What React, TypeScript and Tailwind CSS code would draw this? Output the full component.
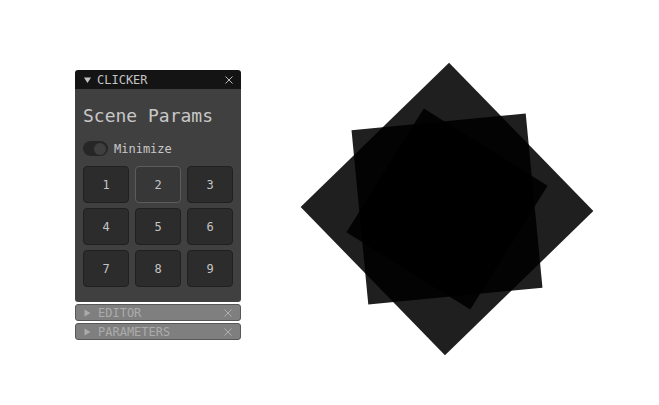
import React from 'react';

const mono = { fontFamily: '"DejaVu Sans Mono", "Liberation Mono", monospace' };

const squares = [
  { side: 207, angle: 45.8 },
  { side: 175, angle: -5.5 },
  { side: 146, angle: 32 },
];

function Close({ color }: { color: string }) {
  return (
    <svg width="8" height="8" viewBox="0 0 8 8" className="shrink-0">
      <path d="M0.5 0.5L7.5 7.5M7.5 0.5L0.5 7.5" stroke={color} strokeWidth="1" />
    </svg>
  );
}

function FoldedBar({ label }: { label: string }) {
  return (
    <div className="h-[17px] flex items-center pl-[8px] pr-[8px] bg-[#7f7f7f] border border-[#575757] rounded-[3px] text-[12px] text-[#ababab]">
      <svg width="7" height="8" viewBox="0 0 7 8" className="shrink-0">
        <path d="M0.5 0.5L6.5 4L0.5 7.5Z" fill="#ababab" />
      </svg>
      <span className="ml-[7px] flex-1 leading-none">{label}</span>
      <Close color="#b0b0b0" />
    </div>
  );
}

export default function App() {
  return (
    <div className="relative w-[659px] h-[405px] bg-white overflow-hidden" style={mono}>
      <svg width="659" height="405" className="absolute inset-0">
        {squares.map((s, i) => (
          <rect
            key={i}
            x={-s.side / 2}
            y={-s.side / 2}
            width={s.side}
            height={s.side}
            fill="#000"
            fillOpacity={0.88}
            transform={`translate(447 209) rotate(${s.angle})`}
          />
        ))}
      </svg>

      <div className="absolute left-[75px] top-[70px] w-[166px] flex flex-col gap-[2px]">
        <div className="rounded-[3px] overflow-hidden">
          <div className="h-[19px] bg-[#141414] flex items-center pl-[9px] pr-[8px] text-[12px] text-[#c4c4c4]">
            <svg width="7" height="6" viewBox="0 0 7 6" className="shrink-0">
              <path d="M0 0.5H7L3.5 6Z" fill="#c4c4c4" />
            </svg>
            <span className="ml-[6px] flex-1 leading-none">CLICKER</span>
            <Close color="#bdbdbd" />
          </div>
          <div className="bg-[#404040] px-2 pt-[16px] pb-[15px]">
            <div className="h-[22px] leading-[22px] text-[18px] text-[#c8c8c8]">Scene Params</div>
            <div className="mt-[14px] h-[15px] flex items-center gap-[6px]">
              <div className="w-[25px] h-[15px] rounded-full bg-[#262626] flex items-center justify-end pr-[2px]">
                <div className="w-[12px] h-[12px] rounded-full bg-[#3f3f3f]" />
              </div>
              <span className="text-[12px] text-[#c8c8c8] leading-none">Minimize</span>
            </div>
            <div className="mt-[10px] grid grid-cols-3 gap-x-[6px] gap-y-[5px]">
              {[1, 2, 3, 4, 5, 6, 7, 8, 9].map((n) => (
                <div
                  key={n}
                  className={
                    n === 2
                      ? 'h-[37px] rounded-[4px] border border-[#5c5c5c] bg-[#373737] flex items-center justify-center text-[12px] text-[#c4c4c4]'
                      : 'h-[37px] rounded-[4px] border border-[#202020] bg-[#2c2c2c] flex items-center justify-center text-[12px] text-[#c4c4c4]'
                  }
                >
                  {n}
                </div>
              ))}
            </div>
          </div>
        </div>
        <FoldedBar label="EDITOR" />
        <FoldedBar label="PARAMETERS" />
      </div>
    </div>
  );
}
